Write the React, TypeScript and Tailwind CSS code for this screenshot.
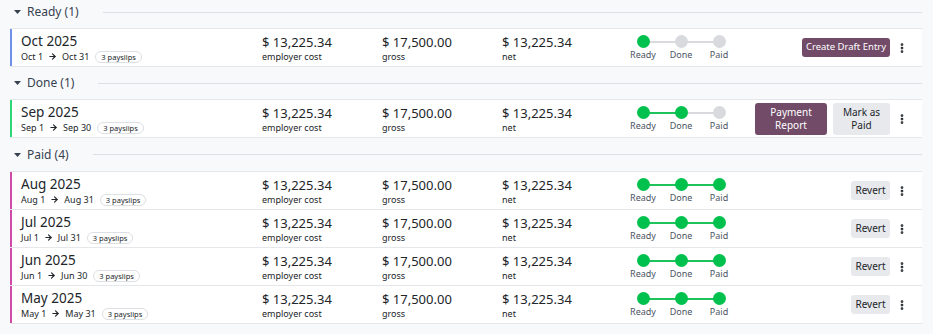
import { ArrowRight, EllipsisVertical } from 'lucide-react';

type Stage = 'ready' | 'done' | 'paid';

interface Period {
    title: string;
    from: string;
    to: string;
}

const steps = ['Ready', 'Done', 'Paid'];

function Caret() {
    return (
        <svg width="7" height="4" viewBox="0 0 7 4" className="mr-[6px] ml-[4px]">
            <path d="M0 0 L7 0 L3.5 4 Z" fill="#374151" />
        </svg>
    );
}

function GroupHeader({ label, height }: { label: string; height: string }) {
    return (
        <div className={`flex items-center pl-[10px] pr-[11px] ${height}`}>
            <Caret />
            <span className="text-[12px] text-[#374151]">{label}</span>
            <div className="ml-[24px] h-px flex-1 bg-[#dcdfe3]" />
        </div>
    );
}

function Stepper({ stage }: { stage: Stage }) {
    const reached = stage === 'ready' ? 1 : stage === 'done' ? 2 : 3;
    return (
        <div className="relative flex w-[114px] items-start justify-between">
            <div className="absolute top-[6px] left-[19px] h-[2px] w-[38px]" style={{ background: reached >= 2 ? '#1cc45a' : '#d8dadd' }} />
            <div className="absolute top-[6px] left-[57px] h-[2px] w-[38px]" style={{ background: reached >= 3 ? '#1cc45a' : '#d8dadd' }} />
            {steps.map((s, i) => (
                <div key={s} className="relative flex w-[38px] flex-col items-center">
                    <div className={`h-[13px] w-[13px] rounded-full ${i < reached ? 'bg-[#00c14d]' : 'bg-[#d8dadd]'}`} />
                    <span className="mt-[1px] text-[9px] leading-[11px] text-[#4b5563]">{s}</span>
                </div>
            ))}
        </div>
    );
}

function Amount({ value, label }: { value: string; label: string }) {
    return (
        <div className="flex w-[120px] flex-col">
            <span className="text-[13px] leading-[18px] text-[#212529]">{value}</span>
            <span className="text-[9px] leading-[12px] text-[#212529]">{label}</span>
        </div>
    );
}

function Actions({ stage }: { stage: Stage }) {
    if (stage === 'ready') {
        return (
            <button className="h-[19px] w-[88px] rounded-[3px] bg-[#714b67] text-[9.5px] text-white">Create Draft Entry</button>
        );
    }
    if (stage === 'done') {
        return (
            <div className="flex gap-[6px]">
                <button className="h-[32px] w-[72px] rounded-[3px] bg-[#714b67] text-[10px] leading-[13px] text-white">Payment<br />Report</button>
                <button className="h-[32px] w-[57px] rounded-[3px] bg-[#e7e9ed] text-[10px] leading-[13px] text-[#212529]">Mark as<br />Paid</button>
            </div>
        );
    }
    return (
        <button className="h-[19px] w-[39px] rounded-[3px] bg-[#e7e9ed] text-[10px] text-[#212529]">Revert</button>
    );
}

function Row({ period, stage, accent, last }: { period: Period; stage: Stage; accent: string; last?: boolean }) {
    return (
        <div className={`flex items-center bg-white ${last ? 'h-[37px]' : 'h-[38px] border-b border-[#e5e7eb]'}`}>
            <div className={`h-full w-[2px] ${accent}`} />
            <div className="flex w-[250px] flex-col pl-[9px]">
                <span className="text-[13.5px] leading-[18px] text-[#212529]">{period.title}</span>
                <div className="flex items-center text-[9px] leading-[13px] text-[#212529]">
                    <span>{period.from}</span>
                    <ArrowRight size={9} strokeWidth={3} className="mx-[5px]" />
                    <span>{period.to}</span>
                    <span className="ml-[6px] rounded-full border border-[#dcdfe3] px-[5px] text-[7.5px] leading-[10px]">3 payslips</span>
                </div>
            </div>
            <Amount value="$ 13,225.34" label="employer cost" />
            <Amount value="$ 17,500.00" label="gross" />
            <Amount value="$ 13,225.34" label="net" />
            <div className="pl-[2px]">
                <Stepper stage={stage} />
            </div>
            <div className="flex flex-1 justify-end">
                <Actions stage={stage} />
            </div>
            <div className="mr-[8px] flex w-[24px] justify-center">
                <EllipsisVertical size={12} strokeWidth={3.5} className="text-[#212529]" />
            </div>
        </div>
    );
}

function Group({ rows, stage, accent }: { rows: Period[]; stage: Stage; accent: string }) {
    return (
        <div className="mr-[11px] ml-[10px] border-t border-b border-[#e5e7eb]">
            {rows.map((p, i) => (
                <Row key={p.title} period={p} stage={stage} accent={accent} last={i === rows.length - 1} />
            ))}
        </div>
    );
}

export default function App() {
    return (
        <div className="h-[334px] w-[933px] overflow-hidden bg-[#f8f9fa]" style={{ fontFamily: '"Noto Sans", "Open Sans", sans-serif' }}>
            <GroupHeader label="Ready (1)" height="h-[28px] pb-[4px]" />
            <Group stage="ready" accent="bg-[#6f90ea]" rows={[{ title: 'Oct 2025', from: 'Oct 1', to: 'Oct 31' }]} />
            <GroupHeader label="Done (1)" height="h-[32px]" />
            <Group stage="done" accent="bg-[#2fd675]" rows={[{ title: 'Sep 2025', from: 'Sep 1', to: 'Sep 30' }]} />
            <GroupHeader label="Paid (4)" height="h-[33px]" />
            <Group
                stage="paid"
                accent="bg-[#d04aa8]"
                rows={[
                    { title: 'Aug 2025', from: 'Aug 1', to: 'Aug 31' },
                    { title: 'Jul 2025', from: 'Jul 1', to: 'Jul 31' },
                    { title: 'Jun 2025', from: 'Jun 1', to: 'Jun 30' },
                    { title: 'May 2025', from: 'May 1', to: 'May 31' },
                ]}
            />
        </div>
    );
}
